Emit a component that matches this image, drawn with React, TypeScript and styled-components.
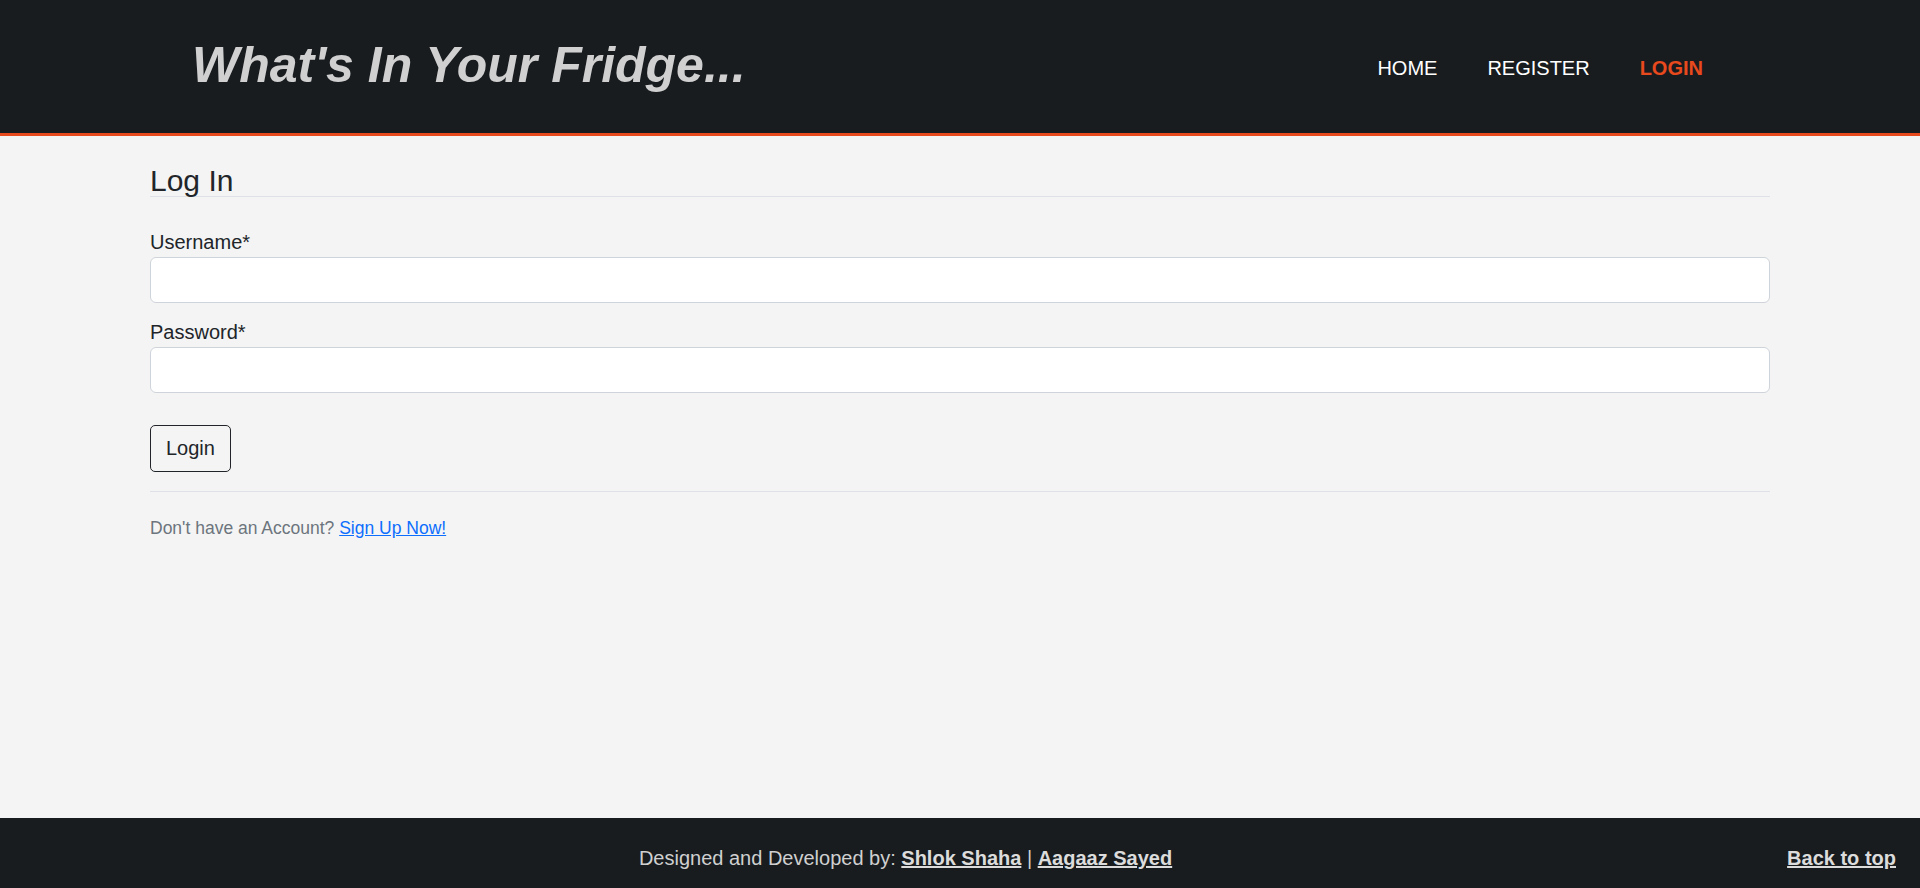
import React from "react";
import styled, { createGlobalStyle } from "styled-components";

const GlobalStyle = createGlobalStyle`
  * { box-sizing: border-box; }
  html, body { margin: 0; padding: 0; }
  body {
    font-family: "Liberation Sans", Arial, sans-serif;
    background: #f4f4f4;
    color: #212529;
  }
`;

const Page = styled.div`
  min-height: 100vh;
  display: flex;
  flex-direction: column;
`;

const Header = styled.header`
  background: #181c1f;
  border-bottom: 3px solid #e8491d;
  height: 136px;
`;

const HeaderInner = styled.div`
  width: 80%;
  height: 133px;
  margin: 0 auto;
  display: flex;
  align-items: center;
  justify-content: space-between;
`;

const Brand = styled.h1`
  margin: 0 0 4px 0;
  font-size: 50px;
  line-height: 56px;
  font-weight: 700;
  font-style: italic;
  color: #d0d0d0;
`;

const Nav = styled.ul`
  list-style: none;
  margin: 3px 0 0 0;
  padding: 0;
  display: flex;
`;

const NavLink = styled.a<{ $active?: boolean }>`
  display: block;
  padding: 0 25px;
  font-size: 20px;
  line-height: 30px;
  text-decoration: none;
  color: ${(p) => (p.$active ? "#e8491d" : "#ffffff")};
  font-weight: ${(p) => (p.$active ? 700 : 400)};
`;

const Main = styled.main`
  flex: 1;
  width: 1620px;
  margin: 0 auto;
  padding-top: 29px;
`;

const Title = styled.h2`
  margin: 0;
  font-size: 30px;
  line-height: 31px;
  font-weight: 400;
  border-bottom: 1px solid #dee2e6;
`;

const Form = styled.form`
  margin-top: 30px;
  display: flex;
  flex-direction: column;
`;

const Field = styled.div`
  margin-bottom: 14px;
`;

const Label = styled.label`
  display: block;
  font-size: 20px;
  line-height: 30px;
`;

const Input = styled.input`
  display: block;
  width: 100%;
  height: 46px;
  padding: 8px 16px;
  font-family: inherit;
  font-size: 20px;
  background: #ffffff;
  border: 1px solid #ced4da;
  border-radius: 6px;
  outline: none;
`;

const Button = styled.button`
  align-self: flex-start;
  margin-top: 18px;
  padding: 7px 15px;
  font-family: inherit;
  font-size: 20px;
  line-height: 31px;
  color: #212529;
  background: transparent;
  border: 1px solid #212529;
  border-radius: 5px;
  cursor: pointer;
`;

const Divider = styled.div`
  height: 1px;
  background: #dee2e6;
  margin-top: 19px;
`;

const Muted = styled.p`
  margin: 23px 0 0 0;
  font-size: 17.5px;
  line-height: 26px;
  color: #6c757d;
`;

const SignUp = styled.a`
  color: #0d6efd;
  text-decoration: underline;
`;

const Footer = styled.footer`
  background: #181c1f;
  height: 70px;
  padding: 28px 24px 0 24px;
  display: flex;
  align-items: flex-start;
  font-size: 20px;
  line-height: 24px;
  color: #d0d0d0;
`;

const Credits = styled.div`
  flex: 1;
  text-align: center;
`;

const FooterLink = styled.a`
  color: #dcdcdc;
  font-weight: 700;
  text-decoration: underline;
`;

export default function App() {
  return (
    <>
      <GlobalStyle />
      <Page>
        <Header>
          <HeaderInner>
            <Brand>What's In Your Fridge...</Brand>
            <Nav>
              <li><NavLink href="#">HOME</NavLink></li>
              <li><NavLink href="#">REGISTER</NavLink></li>
              <li><NavLink href="#" $active>LOGIN</NavLink></li>
            </Nav>
          </HeaderInner>
        </Header>
        <Main>
          <Title>Log In</Title>
          <Form onSubmit={(e) => e.preventDefault()}>
            <Field>
              <Label htmlFor="username">Username*</Label>
              <Input id="username" type="text" />
            </Field>
            <Field>
              <Label htmlFor="password">Password*</Label>
              <Input id="password" type="password" />
            </Field>
            <Button type="submit">Login</Button>
          </Form>
          <Divider />
          <Muted>
            Don't have an Account? <SignUp href="#">Sign Up Now!</SignUp>
          </Muted>
        </Main>
        <Footer>
          <Credits>
            Designed and Developed by: <FooterLink href="#">Shlok Shaha</FooterLink> | <FooterLink href="#">Aagaaz Sayed</FooterLink>
          </Credits>
          <FooterLink href="#">Back to top</FooterLink>
        </Footer>
      </Page>
    </>
  );
}
